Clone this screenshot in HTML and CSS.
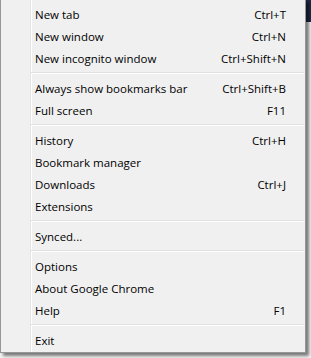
FILE: index.html
```html
<!DOCTYPE html>
<html lang="en">
<head>
    <meta charset="UTF-8">
    <title>Chrome menu</title>
    <link rel="stylesheet" href="styles.css">
</head>
<body>
    <div class="window-edge"></div>
    <div class="menu">
        <div class="item"><span>New tab</span><span class="key">Ctrl+T</span></div>
        <div class="item"><span>New window</span><span class="key">Ctrl+N</span></div>
        <div class="item"><span>New incognito window</span><span class="key">Ctrl+Shift+N</span></div>
        <div class="sep"></div>
        <div class="item"><span>Always show bookmarks bar</span><span class="key">Ctrl+Shift+B</span></div>
        <div class="item"><span>Full screen</span><span class="key">F11</span></div>
        <div class="sep"></div>
        <div class="item"><span>History</span><span class="key">Ctrl+H</span></div>
        <div class="item"><span>Bookmark manager</span></div>
        <div class="item"><span>Downloads</span><span class="key">Ctrl+J</span></div>
        <div class="item"><span>Extensions</span></div>
        <div class="sep"></div>
        <div class="item"><span>Synced...</span></div>
        <div class="sep"></div>
        <div class="item"><span>Options</span></div>
        <div class="item"><span>About Google Chrome</span></div>
        <div class="item"><span>Help</span><span class="key">F1</span></div>
        <div class="sep"></div>
        <div class="item"><span>Exit</span></div>
    </div>
</body>
</html>
```

FILE: styles.css
```css
body {
    margin: 0;
    padding: 0;
    background-color: #f4f4f4;
    font-family: 'Open Sans', sans-serif;
    font-size: 11.5px;
    color: #000;
    position: relative;
    height: 358px;
    overflow: hidden;
}

/* browser window peeking out behind the menu */
.window-edge {
    position: absolute;
    top: 0;
    right: 0;
    width: 6px;
    height: 22px;
    background-color: #1d2a44;
}

.menu {
    position: relative;
    width: 306px;
    height: 354px;
    box-sizing: border-box;
    margin-top: -1px;
    padding-top: 3px;
    background-color: #f0f0f0;
    background-image: linear-gradient(to right, transparent 29px, #e2e3e3 29px, #e2e3e3 30px, #fff 30px, #fff 31px, transparent 31px);
    border: 1px solid #979797;
    box-shadow: 3px 3px 3px rgba(0, 0, 0, 0.5);
}

.item {
    display: flex;
    justify-content: space-between;
    align-items: center;
    height: 22px;
    padding: 0 19px 0 34px;
}

.key {
    text-align: right;
}

.sep {
    height: 8px;
    margin-left: 30px;
    margin-right: 1px;
    background-image: linear-gradient(to bottom, transparent 3px, #e0e0e0 3px, #e0e0e0 4px, #fff 4px, #fff 5px, transparent 5px);
}
```
